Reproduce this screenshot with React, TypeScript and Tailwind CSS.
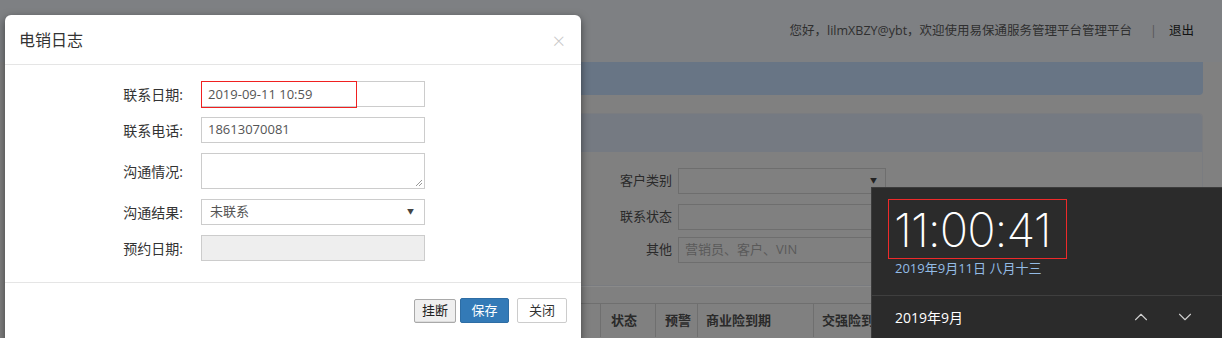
import { ChevronUp, ChevronDown } from "lucide-react"

const cjk = { fontFamily: '"Open Sans", "Noto Sans CJK SC", sans-serif' }

function FormRow({ label, children }: { label: string; children: React.ReactNode }) {
    return (
        <div className="flex items-center">
            <div className="w-[196px] text-right text-[14px] text-[#333] pr-[18px]">{label}</div>
            {children}
        </div>
    )
}

function BackgroundPage() {
    return (
        <div className="w-full h-full bg-[#808080]">
            {/* top header */}
            <div className="h-[62px] bg-[#7e8083] flex items-center justify-end pr-[28px] text-[12.5px] text-[#2f2f2f]">
                <span>您好，lilmXBZY@ybt，欢迎使用易保通服务管理平台管理平台</span>
                <span className="ml-[18px] mr-[12px] text-[#555]">|</span>
                <span className="text-[#111]">退出</span>
            </div>
            <div className="pl-[18px] pr-[19px]">
                <div className="h-[33px] bg-[#687585] rounded-b-[4px]" />
                <div className="mt-[18px] rounded-t-[4px] border border-[#7a7c80]">
                    <div className="h-[38px] bg-[#757a82] rounded-t-[4px]" />
                    <div className="pt-[16px] pb-[22px] flex flex-col gap-[10px] pl-[599px] text-[13px] text-[#2a2a2a]">
                        <div className="flex items-center">
                            <div className="w-[54px] text-right">客户类别</div>
                            <div className="ml-[6px] w-[208px] h-[26px] border border-[#6e6e6e] flex items-center justify-end pr-[8px] text-[7px] text-[#222]">▼</div>
                        </div>
                        <div className="flex items-center">
                            <div className="w-[54px] text-right">联系状态</div>
                            <div className="ml-[6px] w-[208px] h-[26px] border border-[#6e6e6e]" />
                        </div>
                        <div className="flex items-center -mt-[3px]">
                            <div className="w-[54px] text-right">其他</div>
                            <div className="ml-[6px] w-[208px] h-[26px] border border-[#6e6e6e] flex items-center pl-[6px] text-[#5a5a5a]">营销员、客户、VIN</div>
                        </div>
                    </div>
                </div>
                <div className="h-[17px] border-t border-[#8a8a8a]" />
                <div className="border-t border-[#6f6f6f] h-[34px] flex items-center text-[13px] font-bold text-[#2a2a2a] pl-[582px]">
                    <div className="w-[55px] h-full border-l border-[#6f6f6f] flex items-center pl-[10px]">状态</div>
                    <div className="w-[42px] h-full border-l border-[#6f6f6f] flex items-center pl-[9px]">预警</div>
                    <div className="w-[116px] h-full border-l border-[#6f6f6f] flex items-center pl-[8px]">商业险到期</div>
                    <div className="flex-1 h-full border-l border-[#6f6f6f] flex items-center pl-[8px]">交强险到期</div>
                </div>
            </div>
        </div>
    )
}

function Modal() {
    return (
        <div className="absolute left-[5px] top-[15px] w-[576px] h-[330px] bg-white rounded-[6px] shadow-[0_3px_9px_rgba(0,0,0,0.5)]">
            <div className="h-[50px] border-b border-[#e5e5e5] flex items-center justify-between px-[14px]">
                <span className="text-[16px] text-[#333]">电销日志</span>
                <span className="text-[22px] text-[#c8c8c8] leading-none font-light mr-[2px]">×</span>
            </div>
            <div className="pt-[16px] flex flex-col gap-[10px]">
                <FormRow label="联系日期:">
                    <div className="w-[224px] h-[26px] border border-[#ccc] text-[13px] text-[#555]">
                        {/* red highlight box drawn over the value */}
                        <div className="w-[154px] h-[25px] shadow-[0_0_0_1px_#f02020] flex items-center pl-[6px]">2019-09-11 10:59</div>
                    </div>
                </FormRow>
                <FormRow label="联系电话:">
                    <div className="w-[224px] h-[26px] border border-[#ccc] flex items-center pl-[6px] text-[13px] text-[#555]">18613070081</div>
                </FormRow>
                <FormRow label="沟通情况:">
                    <div className="relative w-[224px] h-[36px] border border-[#ccc]">
                        <svg className="absolute right-[1px] bottom-[1px]" width="8" height="8" viewBox="0 0 8 8">
                            <path d="M7 1 L1 7 M7 4 L4 7" stroke="#999" strokeWidth="1" />
                        </svg>
                    </div>
                </FormRow>
                <FormRow label="沟通结果:">
                    <div className="w-[224px] h-[26px] border border-[#ccc] flex items-center justify-between pl-[8px] pr-[10px] text-[13px] text-[#555]">
                        <span>未联系</span>
                        <span className="text-[7px] text-[#444]">▼</span>
                    </div>
                </FormRow>
                <FormRow label="预约日期:">
                    <div className="w-[224px] h-[26px] border border-[#ccc] bg-[#eee]" />
                </FormRow>
            </div>
            <div className="mt-[21px] border-t border-[#e5e5e5] flex justify-end items-center pt-[15px] pr-[14px] text-[13px]">
                <button className="h-[24px] px-[7px] border border-[#a9a9a9] bg-[#efefef] text-[#222] rounded-[2px] shadow-[inset_0_-1px_0_#ddd]">挂断</button>
                <button className="ml-[4px] h-[25px] w-[49px] bg-[#337ab7] border border-[#2e6da4] text-white rounded-[2px]">保存</button>
                <button className="ml-[8px] h-[25px] w-[50px] bg-white border border-[#ccc] text-[#333] rounded-[2px]">关闭</button>
            </div>
        </div>
    )
}

function ClockFlyout() {
    return (
        <div className="absolute left-[871px] top-[187px] w-[351px] h-[151px] bg-[#2b2b2b] border-t border-l border-[#3c3c3c]">
            <div className="px-[16px] pt-[11px] h-[108px] border-b border-[#3f3f3f]">
                <div className="w-[179px] h-[60px] border border-[#ee2a2a] flex items-center">
                    <span className="ml-[5px] text-[47px] font-extralight text-white leading-none tracking-[-1px]" style={{ fontFamily: '"Inter", "Noto Sans", sans-serif' }}>11:00:41</span>
                </div>
                <div className="pl-[7px] text-[13px] text-[#93bbe6]">2019年9月11日 八月十三</div>
            </div>
            <div className="flex items-center justify-between h-[42px] pl-[23px] pr-[26px] text-[14px] text-white">
                <span>2019年9月</span>
                <div className="flex items-center gap-[22px] text-[#cfcfcf]">
                    <ChevronUp size={22} strokeWidth={1.2} />
                    <ChevronDown size={22} strokeWidth={1.2} />
                </div>
            </div>
        </div>
    )
}

export default function App() {
    return (
        <div className="relative w-[1222px] h-[338px] overflow-hidden" style={cjk}>
            <BackgroundPage />
            <Modal />
            <ClockFlyout />
        </div>
    )
}
